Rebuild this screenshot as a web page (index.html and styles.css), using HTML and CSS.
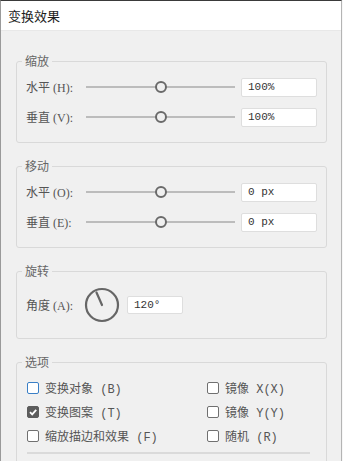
FILE: index.html
```html
<!DOCTYPE html>
<html lang="zh-CN">
<head>
    <meta charset="UTF-8">
    <meta name="viewport" content="width=device-width, initial-scale=1.0">
    <title>变换效果</title>
    <link rel="stylesheet" href="styles.css">
</head>
<body>
<div class="window">
    <div class="titlebar">变换效果</div>

    <div class="content">
        <fieldset class="group">
            <legend>缩放</legend>
            <div class="rows">
                <div class="row">
                    <span class="label">水平 (H):</span>
                    <div class="slider"><span class="thumb" style="left: 50%"></span></div>
                    <input class="field" type="text" value="100%">
                </div>
                <div class="row">
                    <span class="label">垂直 (V):</span>
                    <div class="slider"><span class="thumb" style="left: 50%"></span></div>
                    <input class="field" type="text" value="100%">
                </div>
            </div>
        </fieldset>

        <fieldset class="group">
            <legend>移动</legend>
            <div class="rows">
                <div class="row">
                    <span class="label">水平 (O):</span>
                    <div class="slider"><span class="thumb" style="left: 50%"></span></div>
                    <input class="field" type="text" value="0 px">
                </div>
                <div class="row">
                    <span class="label">垂直 (E):</span>
                    <div class="slider"><span class="thumb" style="left: 50%"></span></div>
                    <input class="field" type="text" value="0 px">
                </div>
            </div>
        </fieldset>

        <fieldset class="group">
            <legend>旋转</legend>
            <div class="rows">
                <div class="row row-dial">
                    <span class="label">角度 (A):</span>
                    <svg class="dial" width="36" height="36" viewBox="0 0 36 36">
                        <circle cx="18" cy="18" r="16" fill="none" stroke="#666" stroke-width="2.2"/>
                        <line x1="18" y1="18" x2="12.5" y2="5.5" stroke="#666" stroke-width="2.2" stroke-linecap="round"/>
                    </svg>
                    <input class="field field-small" type="text" value="120°">
                </div>
            </div>
        </fieldset>

        <fieldset class="group">
            <legend>选项</legend>
            <div class="options">
                <label class="check"><span class="box focus"></span>变换对象 (B)</label>
                <label class="check"><span class="box"></span>镜像 X(X)</label>
                <label class="check">
                    <span class="box on">
                        <svg width="10" height="10" viewBox="0 0 10 10"><path d="M2 5.2 L4.2 7.4 L8.2 2.8" fill="none" stroke="#fff" stroke-width="1.8"/></svg>
                    </span>变换图案 (T)
                </label>
                <label class="check"><span class="box"></span>镜像 Y(Y)</label>
                <label class="check"><span class="box"></span>缩放描边和效果 (F)</label>
                <label class="check"><span class="box"></span>随机 (R)</label>
            </div>
            <div class="separator"></div>
        </fieldset>
    </div>
</div>
</body>
</html>
```

FILE: styles.css
```css
* {
    box-sizing: border-box;
}
body {
    margin: 0;
    background: #f7f7f7;
}
.window {
    width: 342px;
    height: 461px;
    overflow: hidden;
    background: #f0f0f0;
    border-top: 1px solid #3a3a3a;
    border-left: 1px solid #9a9a9a;
    border-right: 1px solid #b4b4b4;
    font-family: "Liberation Serif", "Noto Sans CJK SC", sans-serif;
    font-size: 12px;
    color: #555;
}
.titlebar {
    height: 30px;
    padding-left: 7px;
    background: #fff;
    border-bottom: 1px solid #e8e8e8;
    font: 13px/29px "Noto Sans CJK SC", sans-serif;
    color: #1e1e1e;
}
.content {
    display: flex;
    flex-direction: column;
    gap: 15px;
    padding: 22px 14px 0 15px;
}
.group {
    margin: 0;
    min-width: 0;
    padding: 0 9px 10px;
    border: 1px solid #d9d9d9;
    border-radius: 3px;
}
.group legend {
    margin-left: -4px;
    padding: 0 3px;
    font: 12px/16px "Noto Sans CJK SC", sans-serif;
    color: #666;
}
.rows {
    padding-top: 3px;
}
.row {
    display: flex;
    align-items: center;
    height: 30px;
}
.row-dial {
    height: 46px;
}
.label {
    width: 60px;
    flex: none;
    white-space: nowrap;
}
.slider {
    position: relative;
    flex: 1;
    height: 12px;
    margin-right: 6px;
}
.slider::before {
    content: "";
    position: absolute;
    left: 0;
    right: 0;
    top: 5px;
    height: 2px;
    background: #bcbcbc;
}
.thumb {
    position: absolute;
    top: 0;
    width: 12px;
    height: 12px;
    border: 2.5px solid #6a6a6a;
    border-radius: 50%;
    background: #f0f0f0;
    transform: translateX(-50%);
}
.field {
    width: 76px;
    height: 19px;
    padding: 0 6px;
    border: 1px solid #dedede;
    border-radius: 2px;
    background: #fff;
    font: 11px "Liberation Mono", monospace;
    color: #333;
    outline: none;
}
.dial {
    flex: none;
    margin-left: -2px;
    margin-right: 7px;
}
.field-small {
    width: 56px;
    height: 18px;
}
.options {
    display: grid;
    grid-template-columns: 180px 1fr;
    grid-auto-rows: 24px;
    padding: 6px 0 0 1px;
}
.check {
    display: flex;
    align-items: center;
    gap: 6px;
    font-family: "Liberation Mono", "Noto Sans CJK SC", monospace;
    font-size: 12px;
    color: #555;
    white-space: nowrap;
}
.box {
    display: flex;
    align-items: center;
    justify-content: center;
    width: 12px;
    height: 12px;
    flex: none;
    border: 1px solid #707070;
    border-radius: 2px;
    background: #fff;
}
.box.focus {
    border-color: #3a7fc6;
}
.box.on {
    background: #5c5c5c;
    border-color: #5c5c5c;
}
.separator {
    height: 2px;
    margin: 4px 7px 0 1px;
    background: #dadada;
}
```
